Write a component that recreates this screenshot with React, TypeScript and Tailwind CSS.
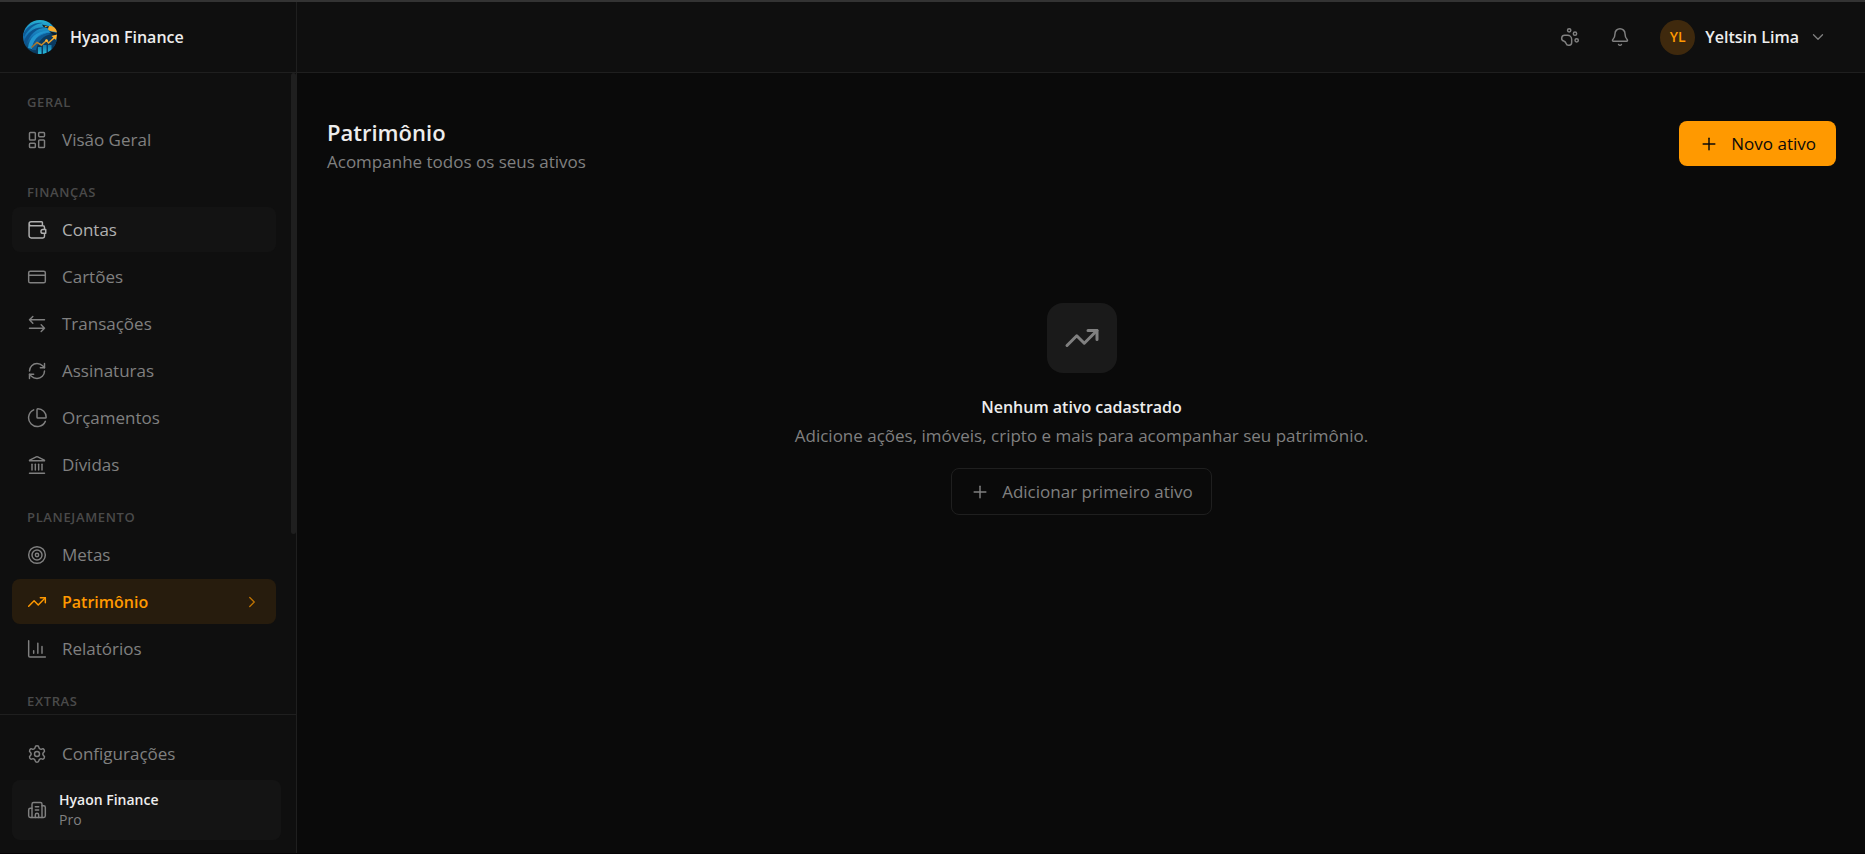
import React from "react";
import {
  LayoutDashboard, CreditCard, RefreshCw, TrendingUp, Target, Settings, Bell,
  ChevronDown, ChevronRight, Plus, Landmark,
} from "lucide-react";

type IconProps = { className?: string; strokeWidth?: number };

function Svg({ className, strokeWidth = 1.75, children }: IconProps & { children: React.ReactNode }) {
  return (
    <svg viewBox="0 0 24 24" fill="none" stroke="currentColor" strokeWidth={strokeWidth} strokeLinecap="round" strokeLinejoin="round" className={className} aria-hidden="true">
      {children}
    </svg>
  );
}

const WalletIcon = (p: IconProps) => (
  <Svg {...p}>
    <path d="M2.500 4.500v14.500a2.500 2.500 0 0 0 2.500 2.500h14a2 2 0 0 0 2-2v-3M21 11V9a2 2 0 0 0-2-2H5a2.500 2.500 0 0 1 0-5h12.500a1 1 0 0 1 1 1v4" />
    <path d="M22.500 11.500h-3.500a2.250 2.250 0 0 0 0 4.500h3.500z" />
  </Svg>
);
const SwapIcon = (p: IconProps) => (
  <Svg {...p}>
    <path d="M21 7H3M7 11L3 7l4-4" />
    <path d="M3 17h18M17 21l4-4-4-4" />
  </Svg>
);
const PieIcon = (p: IconProps) => (
  <Svg {...p}>
    <path d="M22 12a1 1 0 0 0 1-1A10 10 0 0 0 13 1a1 1 0 0 0-1 1v9a1 1 0 0 0 1 1z" />
    <path d="M22 16A10.500 10.500 0 1 1 8 2.200" />
  </Svg>
);
const ReportIcon = (p: IconProps) => (
  <Svg {...p}>
    <path d="M2 2v18a1.500 1.500 0 0 0 1.500 1.500H22M8 17v-3M13 17V5M18 17V9" />
  </Svg>
);
const BuildingIcon = (p: IconProps) => (
  <Svg {...p}>
    <path d="M10 12h4M10 8h4M14 21v-3a2 2 0 0 0-4 0v3" />
    <path d="M6 10H4a2 2 0 0 0-2 2v7a2 2 0 0 0 2 2h16a2 2 0 0 0 2-2V9a2 2 0 0 0-2-2h-2" />
    <path d="M6 21V5a2 2 0 0 1 2-2h8a2 2 0 0 1 2 2v16" />
  </Svg>
);
const PawIcon = (p: IconProps) => (
  <Svg {...p}>
    <circle cx="11" cy="4" r="2" />
    <circle cx="18" cy="8" r="2" />
    <circle cx="20" cy="16" r="2" />
    <path d="M9 10a5 5 0 0 1 5 5v3.500a3.500 3.500 0 0 1-6.840 1.045Q6.520 17.480 4.460 16.840A3.500 3.500 0 0 1 5.500 10Z" />
  </Svg>
);

function Logo() {
  return (
    <svg viewBox="0 0 36 36" className="size-9 shrink-0" aria-hidden="true">
      <defs>
        <linearGradient id="plumage" x1="0.5" y1="0" x2="0.5" y2="1">
          <stop offset="0" stopColor="#28b4d4" />
          <stop offset="0.45" stopColor="#1576b8" />
          <stop offset="1" stopColor="#08304f" />
        </linearGradient>
        <linearGradient id="bars" x1="0" y1="0" x2="0" y2="1">
          <stop offset="0" stopColor="#1579ad" />
          <stop offset="1" stopColor="#2cc3dc" />
        </linearGradient>
        <linearGradient id="gold" x1="0" y1="0" x2="1" y2="0">
          <stop offset="0" stopColor="#9c6a2a" />
          <stop offset="1" stopColor="#ffb02e" />
        </linearGradient>
        <clipPath id="disc"><circle cx="18" cy="18" r="17" /></clipPath>
      </defs>
      <g clipPath="url(#disc)">
        <rect width="36" height="36" fill="url(#plumage)" />
        <path d="M15 36C11 24 17 15 28 14l8 1v21z" fill="#0a3a60" />
        <path d="M1 16C4 8 12 3 21 4c-8 1-14 5-19 14z" fill="#0d5c98" />
        <path d="M2 23C5 13 13 7 24 9 14 9 8 15 4 26z" fill="#0c548f" />
        <path d="M6 29C7 19 14 12 26 12l3 1c-10 0-17 5-19 17z" fill="#2196cf" />
        <path d="M10 31c0-9 6-15 16-17l3 1c-8 2-13 7-15 16z" fill="#0e5b94" />
        <path d="M20 5.500l8 2-1.500 2-5-1.500z" fill="#0c2434" />
        <path d="M22.500 6.800l3.500 1-2.500.4z" fill="#f6ad2b" />
        <path d="M27 12l8 2v3l-4-1z" fill="#0c1d2a" />
        <path d="M16 28h3.500v8H16zM21 26h3.500v10H21zM26 26h3.500v10H26z" fill="url(#bars)" />
      </g>
      <path d="M27 7c4-.5 7.500 2 8 6.500-3-1.500-6-.5-8.500-2.500-1-1 0-2.500.5-4z" fill="#f4a92c" />
      <path d="M9.500 28.500l5.500-5 4.500 2.500 5-4.500 2 2.500 6-5.500" fill="none" stroke="url(#gold)" strokeWidth="1.500" />
      <path d="M29.500 17l5.500-1.500-1 5.500z" fill="#ffae27" />
      <circle cx="24.500" cy="21.500" r="1.300" fill="#ffb53a" />
    </svg>
  );
}

type Item = { label: string; icon: React.ElementType; state?: "hover" | "active" };
const groups: { title: string; items: Item[] }[] = [
  { title: "Geral", items: [{ label: "Visão Geral", icon: LayoutDashboard }] },
  {
    title: "Finanças",
    items: [
      { label: "Contas", icon: WalletIcon, state: "hover" },
      { label: "Cartões", icon: CreditCard },
      { label: "Transações", icon: SwapIcon },
      { label: "Assinaturas", icon: RefreshCw },
      { label: "Orçamentos", icon: PieIcon },
      { label: "Dívidas", icon: Landmark },
    ],
  },
  {
    title: "Planejamento",
    items: [
      { label: "Metas", icon: Target },
      { label: "Patrimônio", icon: TrendingUp, state: "active" },
      { label: "Relatórios", icon: ReportIcon },
    ],
  },
  { title: "Extras", items: [] },
];

function NavItem({ label, icon: Icon, state }: Item) {
  const look =
    state === "active"
      ? "bg-[#271c0d] text-[16px] font-semibold text-[#ff9900]"
      : state === "hover"
        ? "bg-[#131313] text-[#b0b0b0]"
        : "text-[#808080]";
  return (
    <a href="#" aria-current={state === "active" ? "page" : undefined} className={`flex h-[45px] items-center gap-[15px] rounded-lg px-[15px] ${look}`}>
      <Icon className="size-5 shrink-0" strokeWidth={1.75} />
      <span className="grow">{label}</span>
      {state === "active" && <ChevronRight className="size-[18px] opacity-70" strokeWidth={1.75} />}
    </a>
  );
}

export default function App() {
  return (
    <div className="flex h-screen flex-col overflow-hidden border-t-2 border-b border-t-[#333333] border-b-[#050305] bg-[#0a0a0a] font-['Open_Sans','Noto_Sans',sans-serif] text-[17px] leading-6 text-[#808080]">
      <div className="flex min-h-0 grow">
        <aside className="flex w-[297px] shrink-0 flex-col border-r border-[#1f1f1f] bg-[#0f0f0f]">
          <div className="flex h-[71px] shrink-0 items-center gap-3 border-b border-[#1f1f1f] px-[22px]">
            <Logo />
            <span className="text-[16px] font-semibold text-[#ededed]">Hyaon Finance</span>
          </div>
          <div className="flex min-h-0 grow">
            <nav className="flex min-w-0 grow flex-col gap-5 overflow-hidden pt-[19px] pr-[15px] pl-3">
              {groups.map((g) => (
                <section key={g.title}>
                  <h2 className="px-[15px] pb-[5px] text-[13px] leading-5 font-semibold tracking-wider text-[#4a4a4a] uppercase">{g.title}</h2>
                  <div className="flex flex-col gap-0.5">
                    {g.items.map((i) => <NavItem key={i.label} {...i} />)}
                  </div>
                </section>
              ))}
            </nav>
            <div className="h-[461px] w-[5px] shrink-0 rounded-full bg-[#1f1f1f]" />
          </div>
          <div className="flex shrink-0 flex-col gap-1 border-t border-[#1f1f1f] pt-4 pr-[15px] pb-[13px] pl-3">
            <NavItem label="Configurações" icon={Settings} />
            <div className="flex h-[60px] items-center gap-3 rounded-lg bg-[#141414] px-[15px]">
              <BuildingIcon className="size-5" />
              <div className="text-[14px] leading-5">
                <p className="font-semibold text-[#ededed]">Hyaon Finance</p>
                <p>Pro</p>
              </div>
            </div>
          </div>
        </aside>
        <div className="flex min-w-0 grow flex-col">
          <header className="flex h-[71px] shrink-0 items-center justify-end border-b border-[#1f1f1f] bg-[#0f0f0f] pr-[38px]">
            <button type="button" aria-label="Pets" className="mr-[30px]"><PawIcon className="size-5" /></button>
            <button type="button" aria-label="Notificações" className="mr-[30px]"><Bell className="size-5" strokeWidth={1.75} /></button>
            <button type="button" className="flex items-center gap-2.5">
              <span className="flex size-[35px] items-center justify-center rounded-full bg-[#3f290d] text-[14px] font-semibold text-[#ff9900]">YL</span>
              <span className="text-[16px] font-semibold text-[#ededed]">Yeltsin Lima</span>
              <ChevronDown className="size-[18px]" strokeWidth={1.75} />
            </button>
          </header>
          <main className="flex grow flex-col pt-11 pr-[29px] pl-[30px]">
            <div className="flex items-start justify-between">
              <div>
                <h1 className="text-[22px] leading-[30px] font-semibold text-[#ededed]">Patrimônio</h1>
                <p className="mt-[3px]">Acompanhe todos os seus ativos</p>
              </div>
              <button type="button" className="mt-1 flex h-[45px] items-center gap-3 rounded-lg bg-[#ff9900] px-5 font-medium text-[#0a0a0a]">
                <Plus className="size-5" strokeWidth={1.75} />
                Novo ativo
              </button>
            </div>
            <div className="mt-[129px] flex flex-col items-center">
              <div className="flex size-[70px] items-center justify-center rounded-2xl bg-[#1a1a1a]">
                <TrendingUp className="size-9" strokeWidth={2} />
              </div>
              <h2 className="mt-5 text-[16px] leading-7 font-semibold text-[#ededed]">Nenhum ativo cadastrado</h2>
              <p className="mt-[3px]">Adicione ações, imóveis, cripto e mais para acompanhar seu patrimônio.</p>
              <button type="button" className="mt-5 flex h-[47px] items-center gap-3 rounded-lg border border-[#1f1f1f] px-[18px]">
                <Plus className="size-5" strokeWidth={1.75} />
                Adicionar primeiro ativo
              </button>
            </div>
          </main>
        </div>
      </div>
    </div>
  );
}
